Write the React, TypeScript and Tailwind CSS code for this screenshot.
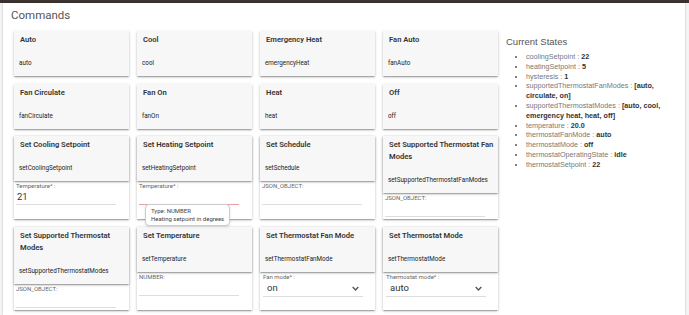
import React from 'react';

type Input =
  | { kind: 'text'; label: string; value?: string; error?: boolean }
  | { kind: 'select'; label: string; value: string };

interface Command {
  title: string;
  name: string;
  input?: Input;
}

// titles keep the line breaks the page shows
const commands: Command[] = [
  { title: 'Auto', name: 'auto' },
  { title: 'Cool', name: 'cool' },
  { title: 'Emergency Heat', name: 'emergencyHeat' },
  { title: 'Fan Auto', name: 'fanAuto' },
  { title: 'Fan Circulate', name: 'fanCirculate' },
  { title: 'Fan On', name: 'fanOn' },
  { title: 'Heat', name: 'heat' },
  { title: 'Off', name: 'off' },
  { title: 'Set Cooling Setpoint', name: 'setCoolingSetpoint', input: { kind: 'text', label: 'Temperature* :', value: '21' } },
  { title: 'Set Heating Setpoint', name: 'setHeatingSetpoint', input: { kind: 'text', label: 'Temperature* :', error: true } },
  { title: 'Set Schedule', name: 'setSchedule', input: { kind: 'text', label: 'JSON_OBJECT:' } },
  { title: 'Set Supported Thermostat Fan\nModes', name: 'setSupportedThermostatFanModes', input: { kind: 'text', label: 'JSON_OBJECT:' } },
  { title: 'Set Supported Thermostat\nModes', name: 'setSupportedThermostatModes', input: { kind: 'text', label: 'JSON_OBJECT:' } },
  { title: 'Set Temperature', name: 'setTemperature', input: { kind: 'text', label: 'NUMBER:' } },
  { title: 'Set Thermostat Fan Mode', name: 'setThermostatFanMode', input: { kind: 'select', label: 'Fan mode* :', value: 'on' } },
  { title: 'Set Thermostat Mode', name: 'setThermostatMode', input: { kind: 'select', label: 'Thermostat mode* :', value: 'auto' } },
];

const states: [string, string][] = [
  ['coolingSetpoint', '22'],
  ['heatingSetpoint', '5'],
  ['hysteresis', '1'],
  ['supportedThermostatFanModes', '[auto, circulate, on]'],
  ['supportedThermostatModes', '[auto, cool, emergency heat, heat, off]'],
  ['temperature', '20.0'],
  ['thermostatFanMode', 'auto'],
  ['thermostatMode', 'off'],
  ['thermostatOperatingState', 'idle'],
  ['thermostatSetpoint', '22'],
];

const cardShadow =
  'shadow-[0_1px_3px_rgba(0,0,0,0.2),0_1px_1px_rgba(0,0,0,0.14),0_2px_1px_-1px_rgba(0,0,0,0.12)]';

const CommandInput = ({ input }: { input: Input }) => {
  if (input.kind === 'select') {
    return (
      <div className="px-[3px] pt-[1px]">
        <div className="text-[6px] leading-[8px] text-[#666]">{input.label}</div>
        <div className="flex items-center justify-between w-[92%] h-[16px] border-b border-[#ddd] pl-[4px] pr-[4px]">
          <span className="text-[9.5px] text-[#333]">{input.value}</span>
          <svg width="7" height="5" viewBox="0 0 10 6" fill="none" stroke="#555" strokeWidth="2">
            <path d="M1 1l4 4 4-4" />
          </svg>
        </div>
      </div>
    );
  }
  return (
    <div className="px-[2px] pt-[1px] pb-[2px]">
      <div className="text-[6px] leading-[8px] text-[#666]">{input.label}</div>
      <div
        className={`w-[90%] h-[15px] border-b pl-[1px] text-[9.5px] leading-[14px] text-[#333] ${
          input.error ? 'border-[#e8a0a0]' : 'border-[#ddd]'
        }`}
      >
        {input.value}
      </div>
    </div>
  );
};

const CommandCard = ({ command }: { command: Command }) => (
  <div className={`relative flex flex-col bg-white ${cardShadow}`}>
    <div className={`bg-[#f7f7f7] pl-[6px] pr-[2px] pt-[3px] pb-[8px] ${command.input ? cardShadow : 'min-h-[45px]'}`}>
      <div className="whitespace-pre text-[7.6px] leading-[12px] font-semibold text-[#333]">{command.title}</div>
      <div className="mt-[12px] text-[6.3px] leading-[10px] text-[#222] -ml-[1px]">{command.name}</div>
    </div>
    {command.input && (
      <div className="flex-1">
        <CommandInput input={command.input} />
      </div>
    )}
    {command.name === 'setHeatingSetpoint' && (
      <div className="absolute left-[8px] top-[68px] z-10 rounded-[4px] border border-[#ccc] bg-white px-[5px] py-[2px] text-[6px] leading-[8px] text-[#444] shadow-sm whitespace-nowrap">
        <div>Type: NUMBER</div>
        <div>Heating setpoint in degrees</div>
      </div>
    )}
  </div>
);

export default function App() {
  return (
    <div className="w-[689px] h-[315px] overflow-hidden bg-[#f4f4f4]" style={{ fontFamily: 'Roboto, "Liberation Sans", sans-serif' }}>
      <div className="h-[3px] bg-[#3b3431]" />
      <div className="ml-[3px] w-[682px] h-[312px] bg-white shadow-[0_0_2px_rgba(0,0,0,0.25)] flex">
        <div className="w-[500px] shrink-0">
          <div className="pl-[8px] pt-[5px] text-[11.5px] leading-[14px] text-[#555]">Commands</div>
          <div className="grid grid-cols-[115px_115px_115px_115px] gap-x-[8px] gap-y-[7.5px] pl-[11px] pt-[9px] items-stretch">
            {commands.map((c) => (
              <CommandCard key={c.name} command={c} />
            ))}
          </div>
        </div>
        <div className="pl-[3px] pt-[33px] pr-[8px]" style={{ fontFamily: '"Liberation Sans", Arial, sans-serif' }}>
          <div className="text-[9.5px] leading-[12px] text-[#555]">Current States</div>
          <ul className="mt-[4px] pl-[20px] list-disc text-[7.2px] leading-[9.8px] text-[#777] marker:text-[#555]">
            {states.map(([k, v]) => (
              <li key={k}>
                {k} : <span className="font-bold text-[#333]">{v}</span>
              </li>
            ))}
          </ul>
        </div>
      </div>
    </div>
  );
}
